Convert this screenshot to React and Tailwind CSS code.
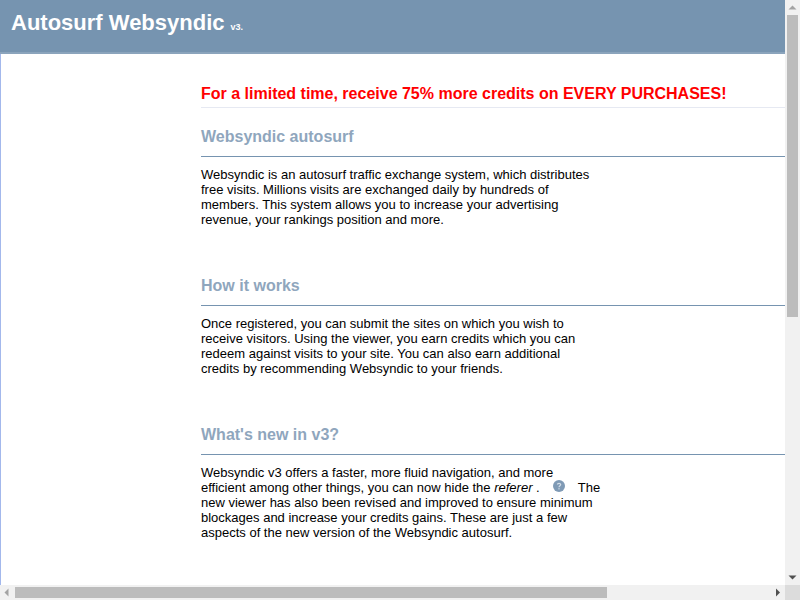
function Arrow({ points, color }) {
  return (
    <svg width="15" height="15" viewBox="0 0 15 15" className="block shrink-0">
      <polygon points={points} fill={color} />
    </svg>
  );
}

function Section({ title, children }) {
  return (
    <section className="pb-[30px]">
      <h2 className="h-[49px] pt-[19px] border-b border-[#7694b0] text-[16px] leading-[20px] font-bold text-[#8fa6bd]">{title}</h2>
      <p className="mt-[10px] w-[400px]">{children}</p>
    </section>
  );
}

export default function App() {
  return (
    <div className="w-[800px] h-[600px] overflow-hidden flex flex-col bg-white text-black font-['Liberation_Sans',Arial,sans-serif] text-[13px] leading-[15px]">
      <div className="flex h-[585px]">
        <div className="w-[785px] h-[585px] overflow-hidden">
          <div className="w-[1001px] h-[1075px]">
            <header className="h-[54px] bg-[#7694b0] border-b-2 border-[#8ba4bc] pl-[11px] pt-[9px] text-white font-bold flex items-baseline">
              <span className="text-[22px] leading-[28px]">Autosurf Websyndic</span>
              <span className="text-[9px] ml-[6px]">v3.</span>
            </header>
            <main className="border-l border-[#a3b8ec] pl-[200px] h-[1021px]">
              <div className="pt-[30px] h-[54px] border-b border-[#e6e9f2] text-[16px] leading-[20px] font-bold text-[#ff0000]">
                For a limited time, receive 75% more credits on EVERY PURCHASES!
              </div>
              <Section title="Websyndic autosurf">
                Websyndic is an autosurf traffic exchange system, which distributes free visits. Millions visits are exchanged daily by hundreds of members. This system allows you to increase your advertising revenue, your rankings position and more.
              </Section>
              <Section title="How it works">
                Once registered, you can submit the sites on which you wish to receive visitors. Using the viewer, you earn credits which you can redeem against visits to your site. You can also earn additional credits by recommending Websyndic to your friends.
              </Section>
              <Section title="What's new in v3?">
                Websyndic v3 offers a faster, more fluid navigation, and more efficient among other things, you can now hide the <i>referer</i> .
                <svg width="12" height="12" viewBox="0 0 12 12" className="inline-block align-baseline mx-[13px]">
                  <circle cx="6" cy="6" r="6" fill="#7f9ab5" />
                  <path d="M4.4 4.6 C4.4 2.9 7.7 2.9 7.7 4.6 C7.7 5.8 6 5.8 6 7.2" fill="none" stroke="#d5dfe9" strokeWidth="1.2" />
                  <rect x="5.4" y="8.2" width="1.2" height="1.2" fill="#d5dfe9" />
                </svg>
                The new viewer has also been revised and improved to ensure minimum blockages and increase your credits gains. These are just a few aspects of the new version of the Websyndic autosurf.
              </Section>
            </main>
          </div>
        </div>
        <div className="w-[15px] h-[585px] bg-[#f1f1f1] flex flex-col">
          <Arrow points="7.5,5.5 3.5,9.5 11.5,9.5" color="#a3a3a3" />
          <div className="ml-[2px] w-[11px] h-[302px] bg-[#bcbcbc]"></div>
          <div className="flex-1"></div>
          <Arrow points="3.5,5.5 11.5,5.5 7.5,9.5" color="#505050" />
        </div>
      </div>
      <div className="flex h-[15px] bg-[#f1f1f1]">
        <Arrow points="4.5,7.5 8.5,3.5 8.5,11.5" color="#a3a3a3" />
        <div className="mt-[2px] h-[11px] w-[592px] bg-[#bcbcbc]"></div>
        <div className="flex-1"></div>
        <Arrow points="6,3.5 10,7.5 6,11.5" color="#505050" />
        <div className="w-[15px] h-[15px] bg-[#dcdcdc]"></div>
      </div>
    </div>
  );
}
